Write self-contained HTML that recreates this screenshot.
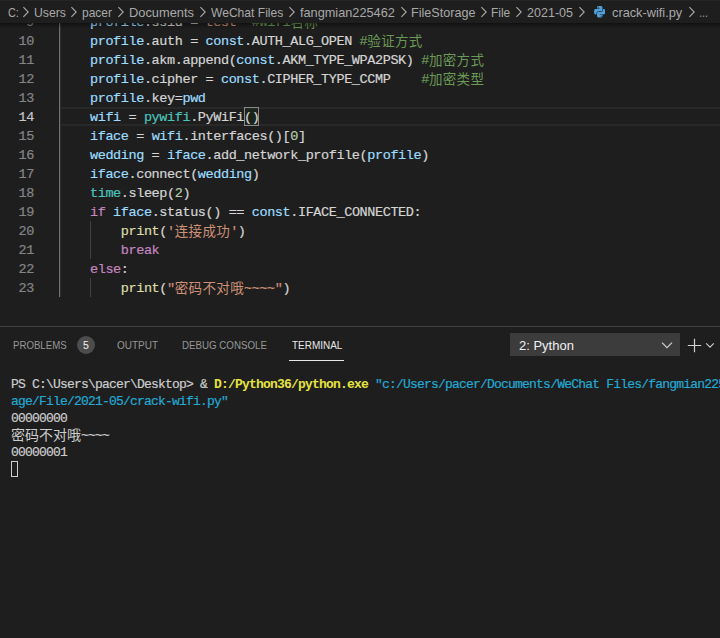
<!DOCTYPE html>
<html><head><meta charset="utf-8">
<style>
html,body{margin:0;padding:0;background:#1e1e1e;}
body{width:720px;height:638px;overflow:hidden;position:relative;font-family:"Liberation Sans","Noto Sans CJK SC",sans-serif;}
.abs{position:absolute;}
/* editor */
#editor{position:absolute;left:0;top:0;width:720px;height:326px;overflow:hidden;}
.ln{position:absolute;left:0;width:720px;height:19px;line-height:19px;font-family:"Liberation Mono","Noto Sans CJK SC",monospace;font-size:13.5px;letter-spacing:-0.4px;white-space:pre;color:#d4d4d4;-webkit-text-stroke:0.2px;}
.ln .n{position:absolute;top:1px;left:0;width:34px;text-align:right;color:#858585;}
.ln .c{position:absolute;top:1px;left:59.2px;height:19px;}
.v{color:#9cdcfe}.m{color:#4cc4bc}.k{color:#c586c0}.f{color:#dcdcaa}.s{color:#ce9178}.g{color:#6a9955}.d{color:#b5cea8}
.cj{font-family:"Noto Sans CJK SC",sans-serif;font-size:13.5px;letter-spacing:0.35px;line-height:19px;vertical-align:top;position:relative;top:-1px;-webkit-text-stroke:0;}
.guide{position:absolute;width:1px;background:#404040;}
#curline{position:absolute;left:60px;top:107px;width:660px;height:15px;border-top:2px solid #282828;border-bottom:2px solid #282828;}
#brk{position:absolute;left:244px;top:107px;width:13px;height:17px;border:1px solid #888;background:rgba(0,100,0,0.1);}
/* breadcrumb */
#bc{position:absolute;left:0;top:0;width:720px;height:23px;background:#1e1e1e;font-size:13px;color:#a9a9a9;line-height:22px;white-space:nowrap;}
#bc span{position:absolute;top:2px;display:inline-block;transform-origin:0 50%;}
#bc svg{position:absolute;}
#bcsh{position:absolute;left:0;top:23px;width:720px;height:6px;background:linear-gradient(to bottom,rgba(0,0,0,0.45) 0%,rgba(0,0,0,0.28) 30%,rgba(0,0,0,0.1) 65%,rgba(0,0,0,0) 100%);}
#tabrow{position:absolute;left:0;top:0;width:720px;height:1px;background:#252526;}
/* panel */
#panel{position:absolute;left:0;top:326px;width:720px;height:312px;background:#1e1e1e;border-top:1px solid #414141;box-sizing:border-box;}
.tab{position:absolute;transform-origin:0 50%;top:12px;font-size:11px;line-height:13px;color:#979797;white-space:nowrap;}
#badge{position:absolute;left:77px;top:9px;width:18px;height:18px;border-radius:9px;background:#4d4d4d;color:#f0f0f0;font-size:10.5px;line-height:18px;text-align:center;}
#sel{position:absolute;left:510px;top:6px;width:170px;height:23px;background:#3c3c3c;color:#f0f0f0;font-size:13px;line-height:23px;}
.t{position:absolute;left:11px;height:17px;line-height:17px;font-family:"Liberation Mono","Noto Sans CJK SC",monospace;font-size:13px;letter-spacing:-0.8px;white-space:pre;color:#cccccc;-webkit-text-stroke:0.2px;}
.tcj{font-family:"Noto Sans CJK SC",sans-serif;font-size:14px;letter-spacing:0;line-height:17px;vertical-align:top;position:relative;top:-1px;-webkit-text-stroke:0;}
.y{color:#e5e340;font-weight:bold;-webkit-text-stroke:0}.cy{color:#23a9d2}
</style></head><body>
<div id="editor">

<div class="guide" style="left:90px;top:221px;height:38px"></div>
<div class="guide" style="left:90px;top:278px;height:19px"></div>
<div id="curline"></div>
<div id="brk"></div>
<div class="guide" style="left:59px;top:12px;height:285px;background:#6e6e6e"></div>
<div class="guide" style="left:60px;top:12px;height:285px;background:#303030"></div>
<div class="ln" style="top:12px"><span class="n">9</span><span class="c">    <span class="v">profile</span>.ssid =<span class="s">'test'</span> <span class="g">#wifi<span class="cj">名称</span></span></span></div>
<div class="ln" style="top:31px"><span class="n">10</span><span class="c" id="l10">    <span class="v">profile</span>.auth = <span class="v">const</span>.AUTH_ALG_OPEN <span class="g" id="g10">#<span class="cj">验证方式</span></span></span></div>
<div class="ln" style="top:50px"><span class="n">11</span><span class="c">    <span class="v">profile</span>.akm.append(<span class="v">const</span>.AKM_TYPE_WPA2PSK) <span class="g">#<span class="cj">加密方式</span></span></span></div>
<div class="ln" style="top:69px"><span class="n">12</span><span class="c">    <span class="v">profile</span>.cipher = <span class="v">const</span>.CIPHER_TYPE_CCMP    <span class="g">#<span class="cj">加密类型</span></span></span></div>
<div class="ln" style="top:88px"><span class="n">13</span><span class="c">    <span class="v">profile</span>.key=<span class="v">pwd</span></span></div>
<div class="ln" style="top:107px"><span class="n" style="color:#c6c6c6">14</span><span class="c">    <span class="v">wifi</span> = <span class="m">pywifi</span>.PyWiFi()</span></div>
<div class="ln" style="top:126px"><span class="n">15</span><span class="c">    <span class="v">iface</span> = <span class="v">wifi</span>.interfaces()[<span class="d">0</span>]</span></div>
<div class="ln" style="top:145px"><span class="n">16</span><span class="c">    <span class="v">wedding</span> = <span class="v">iface</span>.add_network_profile(<span class="v">profile</span>)</span></div>
<div class="ln" style="top:164px"><span class="n">17</span><span class="c">    <span class="v">iface</span>.connect(<span class="v">wedding</span>)</span></div>
<div class="ln" style="top:183px"><span class="n">18</span><span class="c">    <span class="m">time</span>.sleep(<span class="d">2</span>)</span></div>
<div class="ln" style="top:202px"><span class="n">19</span><span class="c">    <span class="k">if</span> <span class="v">iface</span>.status() == <span class="v">const</span>.IFACE_CONNECTED:</span></div>
<div class="ln" style="top:221px"><span class="n">20</span><span class="c">        <span class="f">print</span>(<span class="s">'<span class="cj">连接成功</span>'</span>)</span></div>
<div class="ln" style="top:240px"><span class="n">21</span><span class="c">        <span class="k">break</span></span></div>
<div class="ln" style="top:259px"><span class="n">22</span><span class="c">    <span class="k">else</span>:</span></div>
<div class="ln" style="top:278px"><span class="n">23</span><span class="c">        <span class="f">print</span>(<span class="s">"<span class="cj">密码不对哦</span>~~~~"</span>)</span></div>
</div>
<div id="bc">
<span style="left:7.50px;transform:scaleX(0.833)">C:</span>
<span style="left:33.56px;transform:scaleX(0.939)">Users</span>
<span style="left:82.00px;transform:scaleX(0.924)">pacer</span>
<span style="left:128.51px;transform:scaleX(0.988)">Documents</span>
<span style="left:210.50px;transform:scaleX(0.929)">WeChat Files</span>
<span style="left:300.00px;transform:scaleX(0.979)">fangmian225462</span>
<span style="left:411.03px;transform:scaleX(0.969)">FileStorage</span>
<span style="left:490.84px;transform:scaleX(0.912)">File</span>
<span style="left:527.00px;transform:scaleX(0.965)">2021-05</span>
<span style="left:612.00px;transform:scaleX(0.982)">crack-wifi.py</span>
<span style="left:699.29px;transform:scaleX(0.709)">…</span>
<svg style="left:22.25px;top:4px" width="8" height="16" viewBox="0 0 8 16"><path d="M1.4 3.2 L6.2 8 L1.4 12.8" fill="none" stroke="#a9a9a9" stroke-width="1.1"/></svg>
<svg style="left:70.00px;top:4px" width="8" height="16" viewBox="0 0 8 16"><path d="M1.4 3.2 L6.2 8 L1.4 12.8" fill="none" stroke="#a9a9a9" stroke-width="1.1"/></svg>
<svg style="left:117.00px;top:4px" width="8" height="16" viewBox="0 0 8 16"><path d="M1.4 3.2 L6.2 8 L1.4 12.8" fill="none" stroke="#a9a9a9" stroke-width="1.1"/></svg>
<svg style="left:199.25px;top:4px" width="8" height="16" viewBox="0 0 8 16"><path d="M1.4 3.2 L6.2 8 L1.4 12.8" fill="none" stroke="#a9a9a9" stroke-width="1.1"/></svg>
<svg style="left:287.88px;top:4px" width="8" height="16" viewBox="0 0 8 16"><path d="M1.4 3.2 L6.2 8 L1.4 12.8" fill="none" stroke="#a9a9a9" stroke-width="1.1"/></svg>
<svg style="left:399.75px;top:4px" width="8" height="16" viewBox="0 0 8 16"><path d="M1.4 3.2 L6.2 8 L1.4 12.8" fill="none" stroke="#a9a9a9" stroke-width="1.1"/></svg>
<svg style="left:480.12px;top:4px" width="8" height="16" viewBox="0 0 8 16"><path d="M1.4 3.2 L6.2 8 L1.4 12.8" fill="none" stroke="#a9a9a9" stroke-width="1.1"/></svg>
<svg style="left:515.25px;top:4px" width="8" height="16" viewBox="0 0 8 16"><path d="M1.4 3.2 L6.2 8 L1.4 12.8" fill="none" stroke="#a9a9a9" stroke-width="1.1"/></svg>
<svg style="left:578.25px;top:4px" width="8" height="16" viewBox="0 0 8 16"><path d="M1.4 3.2 L6.2 8 L1.4 12.8" fill="none" stroke="#a9a9a9" stroke-width="1.1"/></svg>
<svg style="left:688.25px;top:4px" width="8" height="16" viewBox="0 0 8 16"><path d="M1.4 3.2 L6.2 8 L1.4 12.8" fill="none" stroke="#a9a9a9" stroke-width="1.1"/></svg>
<svg id="py" style="left:593.8px;top:6.2px" width="11.5" height="11.5" viewBox="0 0 12 12"><g fill="#4f9fd8" stroke="#1e1e1e" stroke-width="0.5" paint-order="stroke"><path d="M5.93 0C5.43 0 4.96 .04 4.55 .12C3.33 .33 3.1 .79 3.1 1.62V2.72H5.98V3.09H2.01C1.17 3.09 .43 3.6 .2 4.56C-.06 5.66 -.08 6.35 .2 7.51C.41 8.36 .9 8.97 1.74 8.97H2.73V7.65C2.73 6.7 3.55 5.85 4.55 5.85H7.43C8.24 5.85 8.88 5.18 8.88 4.37V1.62C8.88 .84 8.22 .25 7.43 .12C6.93 .04 6.43 0 5.93 0ZM4.33 .85A.55 .55 0 1 1 4.33 1.950A.55 .55 0 1 1 4.33 .85Z"/><path transform="rotate(180 6 6)" d="M5.93 0C5.43 0 4.96 .04 4.55 .12C3.33 .33 3.1 .79 3.1 1.62V2.72H5.98V3.09H2.01C1.17 3.09 .43 3.6 .2 4.56C-.06 5.66 -.08 6.35 .2 7.51C.41 8.36 .9 8.97 1.74 8.97H2.73V7.65C2.73 6.7 3.55 5.85 4.55 5.85H7.43C8.24 5.85 8.88 5.18 8.88 4.37V1.62C8.88 .84 8.22 .25 7.43 .12C6.93 .04 6.43 0 5.93 0ZM4.33 .85A.55 .55 0 1 1 4.33 1.950A.55 .55 0 1 1 4.33 .85Z"/></g></svg>
</div>
<div id="bcsh"></div>
<div id="tabrow"></div>
<div id="panel">
<div class="tab" style="left:13.00px;transform:scaleX(0.877)" id="t1">PROBLEMS</div>
<div id="badge">5</div>
<div class="tab" style="left:116.75px;transform:scaleX(0.906)" id="t2">OUTPUT</div>
<div class="tab" style="left:182.00px;transform:scaleX(0.885)" id="t3">DEBUG CONSOLE</div>
<div class="tab" style="left:291.75px;color:#e7e7e7;transform:scaleX(0.906)" id="t4">TERMINAL</div>
<div class="abs" style="left:289px;top:33px;width:55px;height:1px;background:#e7e7e7"></div>
<div id="sel"><span style="position:absolute;left:9px;top:1px" id="seltxt">2: Python</span></div>
<svg class="abs" style="left:661px;top:14px" width="12" height="9" viewBox="0 0 12 9"><path d="M1 1.600L6 6.600L11 1.600" fill="none" stroke="#d0d0d0" stroke-width="1.2"/></svg>
<svg class="abs" style="left:687px;top:11px" width="15" height="15" viewBox="0 0 15 15"><path d="M7.500 0.800V14.200M0.800 7.500H14.200" fill="none" stroke="#d0d0d0" stroke-width="1.200"/></svg>
<svg class="abs" style="left:705px;top:15px" width="10" height="7" viewBox="0 0 10 7"><path d="M1.200 1.400L5 5.200L8.800 1.400" fill="none" stroke="#d0d0d0" stroke-width="1.1"/></svg>
<div class="t" style="top:49px" id="tl1">PS C:\Users\pacer\Desktop&gt; &amp; <span class="y">D:/Python36/python.exe</span> <span class="cy">"c:/Users/pacer/Documents/WeChat Files/fangmian225462/FileStor</span></div>
<div class="t" style="top:66px"><span class="cy">age/File/2021-05/crack-wifi.py"</span></div>
<div class="t" style="top:83px">00000000</div>
<div class="t" style="top:100px"><span class="tcj">密码不对哦</span>~~~~</div>
<div class="t" style="top:117px">00000001</div>
<div class="abs" style="left:11px;top:134px;width:5px;height:14px;border:1px solid #cccccc;box-sizing:content-box"></div>
</div>
</body></html>
